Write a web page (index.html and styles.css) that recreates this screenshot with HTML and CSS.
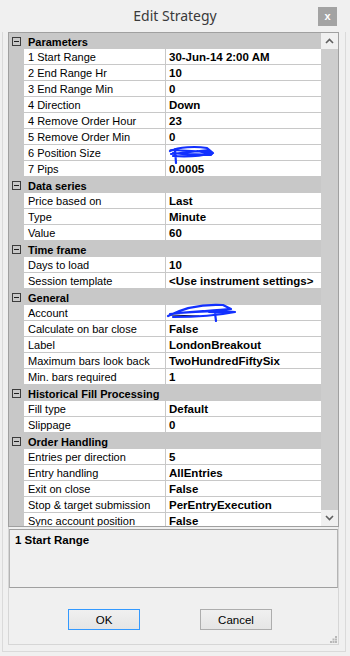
FILE: index.html
```html
<!DOCTYPE html>
<html lang="en">
<head>
    <meta charset="UTF-8">
    <title>Edit Strategy</title>
    <link rel="stylesheet" href="styles.css">
</head>
<body>
    <div class="titlebar">
        <span></span>
        <span class="title">Edit Strategy</span>
        <button class="close">x</button>
    </div>

    <div class="frame">
        <div class="panel">
            <div class="grid">
                <div class="rows">
                    <div class="cat"><span class="toggle"></span>Parameters</div>
                    <div class="row"><div class="name">1 Start Range</div><div class="value">30-Jun-14 2:00 AM</div></div>
                    <div class="row"><div class="name">2 End Range Hr</div><div class="value">10</div></div>
                    <div class="row"><div class="name">3 End Range Min</div><div class="value">0</div></div>
                    <div class="row"><div class="name">4 Direction</div><div class="value">Down</div></div>
                    <div class="row"><div class="name">4 Remove Order Hour</div><div class="value">23</div></div>
                    <div class="row"><div class="name">5 Remove Order Min</div><div class="value">0</div></div>
                    <div class="row"><div class="name">6 Position Size</div><div class="value">
                        <svg class="scribble size" width="48" height="20" viewBox="0 0 48 20">
                            <path class="ink" d="M3 6 L8 6 L7 12"/>
                            <path d="M3 7 C12 3 28 2 40 4 L46 9 C34 12 18 13 6 12 M5 6 L44 8 M4 10 L42 6 M6 9 C18 11 30 10 44 11 M8 5 L9 19 M30 7 L45 10"/>
                        </svg>
                    </div></div>
                    <div class="row"><div class="name">7 Pips</div><div class="value">0.0005</div></div>

                    <div class="cat"><span class="toggle"></span>Data series</div>
                    <div class="row"><div class="name">Price based on</div><div class="value">Last</div></div>
                    <div class="row"><div class="name">Type</div><div class="value">Minute</div></div>
                    <div class="row"><div class="name">Value</div><div class="value">60</div></div>

                    <div class="cat"><span class="toggle"></span>Time frame</div>
                    <div class="row"><div class="name">Days to load</div><div class="value">10</div></div>
                    <div class="row"><div class="name">Session template</div><div class="value">&lt;Use instrument settings&gt;</div></div>

                    <div class="cat"><span class="toggle"></span>General</div>
                    <div class="row"><div class="name">Account</div><div class="value">
                        <svg class="scribble account" width="72" height="22" viewBox="0 0 72 22">
                            <path class="ink" d="M4 15 L34 16"/>
                            <path d="M3 16 C20 7 40 4 58 5 L66 9 C50 10 30 12 14 13 M5 14 C25 12 50 10 70 12 C55 15 30 17 8 17 M12 13 L38 11 M50 13 L51 21 M44 12 L62 13"/>
                        </svg>
                    </div></div>
                    <div class="row"><div class="name">Calculate on bar close</div><div class="value">False</div></div>
                    <div class="row"><div class="name">Label</div><div class="value">LondonBreakout</div></div>
                    <div class="row"><div class="name">Maximum bars look back</div><div class="value">TwoHundredFiftySix</div></div>
                    <div class="row"><div class="name">Min. bars required</div><div class="value">1</div></div>

                    <div class="cat"><span class="toggle"></span>Historical Fill Processing</div>
                    <div class="row"><div class="name">Fill type</div><div class="value">Default</div></div>
                    <div class="row"><div class="name">Slippage</div><div class="value">0</div></div>

                    <div class="cat"><span class="toggle"></span>Order Handling</div>
                    <div class="row"><div class="name">Entries per direction</div><div class="value">5</div></div>
                    <div class="row"><div class="name">Entry handling</div><div class="value">AllEntries</div></div>
                    <div class="row"><div class="name">Exit on close</div><div class="value">False</div></div>
                    <div class="row"><div class="name">Stop &amp; target submission</div><div class="value">PerEntryExecution</div></div>
                    <div class="row"><div class="name">Sync account position</div><div class="value">False</div></div>
                </div>

                <div class="scrollbar">
                    <div class="sb-btn">
                        <svg width="9" height="6" viewBox="0 0 9 6"><polyline points="1,5 4.5,1.5 8,5"/></svg>
                    </div>
                    <div class="sb-thumb"></div>
                    <div class="sb-btn">
                        <svg width="9" height="6" viewBox="0 0 9 6"><polyline points="1,1 4.5,4.5 8,1"/></svg>
                    </div>
                </div>
            </div>

            <div class="desc">1 Start Range</div>

            <div class="buttons">
                <button class="btn ok">OK</button>
                <button class="btn">Cancel</button>
            </div>

            <svg class="grip" width="7" height="7" viewBox="0 0 7 7">
                <rect x="5" y="0" width="2" height="2"/>
                <rect x="2.5" y="2.5" width="2" height="2"/>
                <rect x="5" y="2.5" width="2" height="2"/>
                <rect x="0" y="5" width="2" height="2"/>
                <rect x="2.5" y="5" width="2" height="2"/>
                <rect x="5" y="5" width="2" height="2"/>
            </svg>
        </div>
    </div>
</body>
</html>
```

FILE: styles.css
```css
* {
    margin: 0;
    padding: 0;
    box-sizing: border-box;
}

body {
    width: 350px;
    height: 656px;
    background: #f0f0f0;
    font-family: "Liberation Sans", Arial, sans-serif;
    font-size: 11px;
    color: #000;
    overflow: hidden;
}

/* 标题栏 */
.titlebar {
    height: 32px;
    display: grid;
    grid-template-columns: 1fr auto 1fr;
}

.title {
    padding-top: 6px;
    font-family: "Noto Sans", sans-serif;
    font-size: 14px;
    color: #3a3a3a;
}

.close {
    justify-self: end;
    margin-top: 7px;
    margin-right: 13px;
    width: 19px;
    height: 19px;
    border: none;
    background: #a3a3a3;
    color: #fff;
    font-family: "Liberation Sans", Arial, sans-serif;
    font-size: 11px;
    font-weight: bold;
    line-height: 17px;
}

/* 窗口边框 */
.frame {
    margin-left: 2px;
    width: 344px;
    border: 1px solid #dadada;
    border-top: none;
    padding: 0 6px 6px 5px;
}

.panel {
    position: relative;
    width: 331px;
    border: 1px solid #d6d6d6;
    border-top: none;
    padding-bottom: 14px;
}

/* 属性表格 */
.grid {
    margin: 0 -1px;
    height: 495px;
    border: 1px solid #a0a0a0;
    display: flex;
}

.rows {
    flex: 1;
    background: #c8c8c8;
    overflow: hidden;
}

.cat {
    height: 16px;
    padding-top: 1px;
    display: flex;
    align-items: center;
    font-weight: bold;
}

.toggle {
    position: relative;
    width: 9px;
    height: 9px;
    margin-left: 3px;
    margin-right: 7px;
    border: 1px solid #3c3c3c;
}

.toggle::after {
    content: "";
    position: absolute;
    left: 1px;
    top: 3px;
    width: 5px;
    height: 1px;
    background: #1e1e1e;
}

.row {
    height: 16px;
    padding-left: 15px;
    padding-bottom: 1px;
    display: grid;
    grid-template-columns: 141px 1fr;
    column-gap: 1px;
}

.name,
.value {
    background: #fff;
    padding-top: 2px;
    line-height: 13px;
    white-space: nowrap;
}

.name {
    padding-left: 4px;
}

.value {
    position: relative;
    padding-left: 3px;
    font-size: 11.5px;
    font-weight: bold;
}

/* 涂抹遮挡 */
.scribble {
    position: absolute;
    z-index: 2;
}

.scribble path {
    fill: none;
    stroke: #1230ff;
    stroke-width: 2.2;
    stroke-linecap: round;
    stroke-linejoin: round;
}

.scribble path.ink {
    stroke: #101030;
    stroke-width: 1.2;
}

.scribble.size {
    left: 1px;
    top: -1px;
}

.scribble.account {
    left: -1px;
    top: -5px;
}

/* 滚动条 */
.scrollbar {
    width: 17px;
    display: flex;
    flex-direction: column;
    background: #f0f0f0;
}

.sb-btn {
    height: 16px;
    display: flex;
    align-items: center;
    justify-content: center;
}

.sb-btn polyline {
    fill: none;
    stroke: #606060;
    stroke-width: 1.6;
}

.sb-thumb {
    flex: 1;
    background: #cdcdcd;
}

/* 描述框 */
.desc {
    margin-top: 2px;
    height: 59px;
    border: 1px solid #a0a0a0;
    border-left-color: #b4b4b4;
    border-right-color: #b4b4b4;
    padding: 4px 0 0 5px;
    font-weight: bold;
    font-size: 11.5px;
}

/* 按钮 */
.buttons {
    margin-top: 21px;
    padding-left: 59px;
    display: flex;
    gap: 60px;
}

.btn {
    width: 72px;
    height: 21px;
    border: 1px solid #adadad;
    background: linear-gradient(#f0f0f0, #e5e5e5);
    font-family: "Liberation Sans", Arial, sans-serif;
    font-size: 11.5px;
    color: #000;
}

.btn.ok {
    border-color: #3399ff;
}

.grip {
    position: absolute;
    right: 1px;
    bottom: 1px;
}

.grip rect {
    fill: #b8b8b8;
}
```
